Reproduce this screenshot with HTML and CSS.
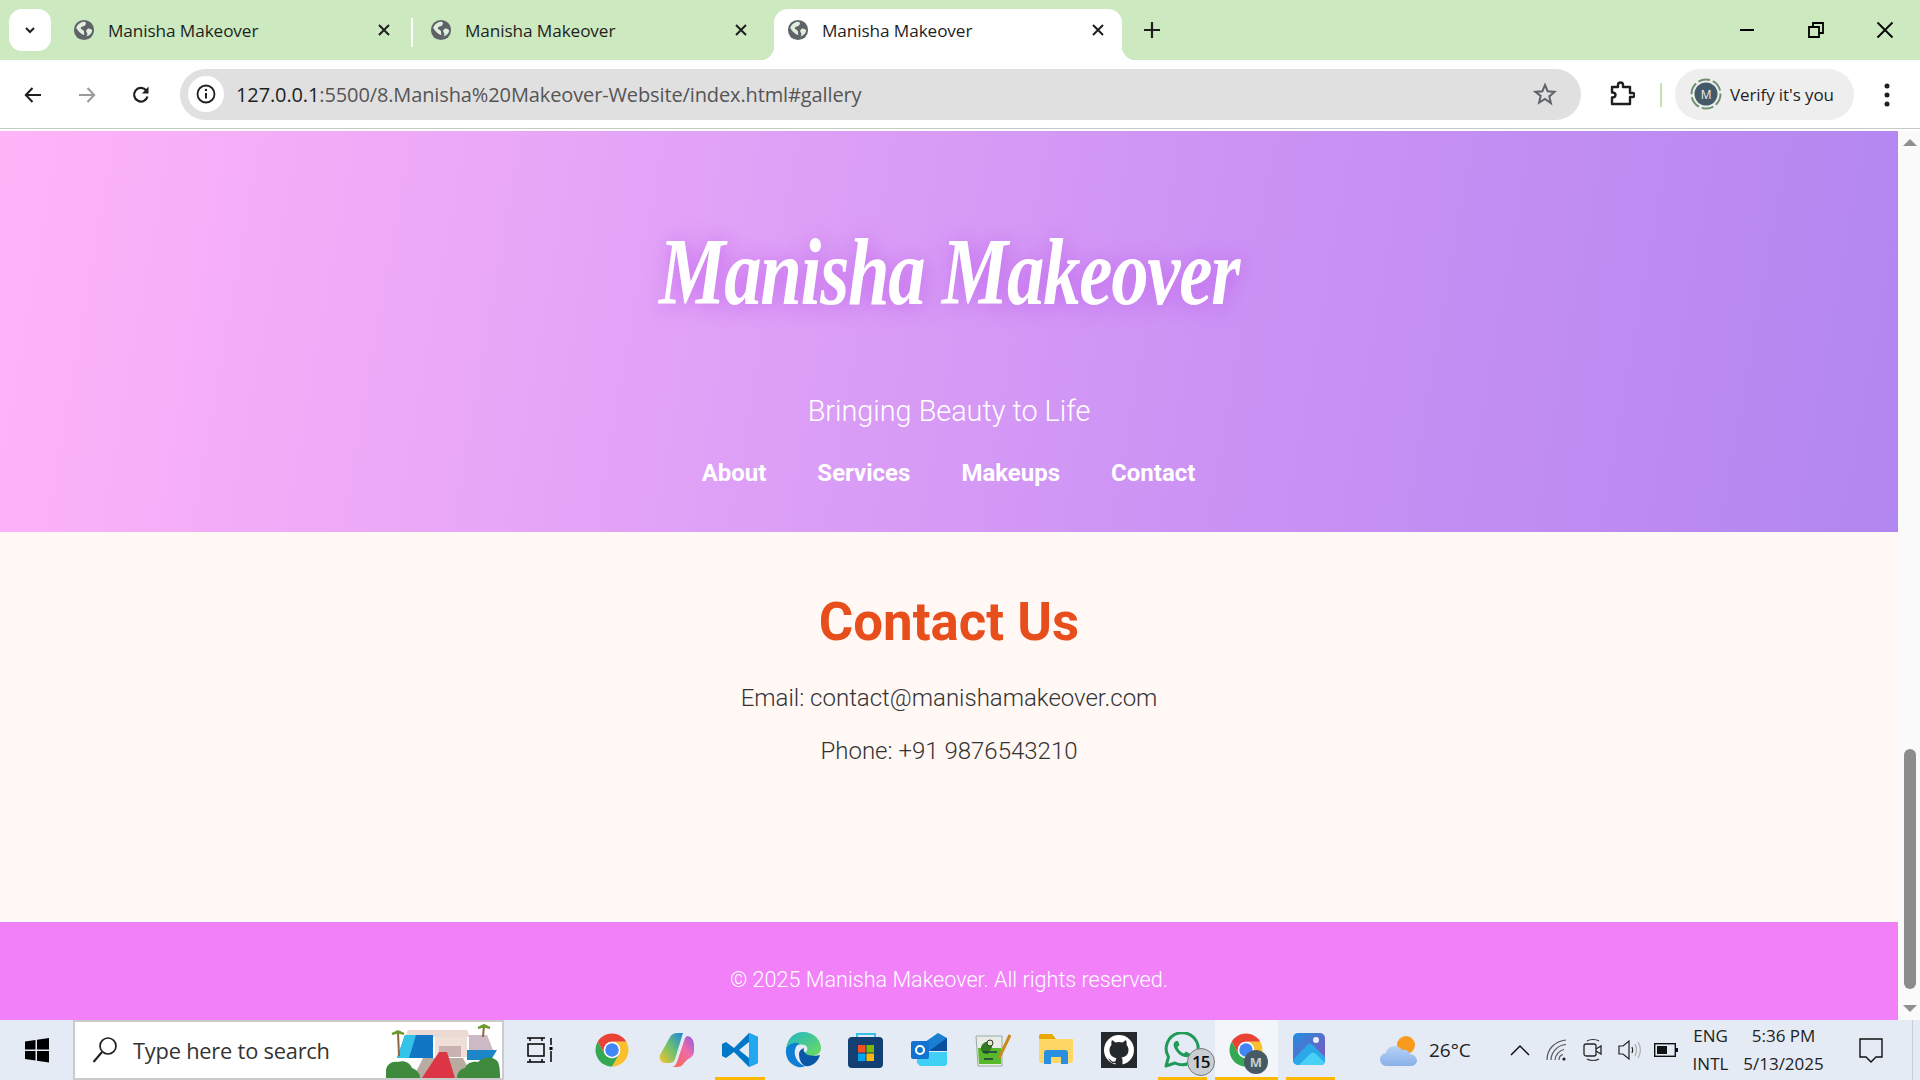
FILE: index.html
```html
<!DOCTYPE html>
<html lang="en">
<head>
<meta charset="utf-8">
<title>Manisha Makeover</title>
<link rel="stylesheet" href="styles.css">
</head>
<body>
<svg class="defs" aria-hidden="true">
  <symbol id="globe" viewBox="0 0 24 24"><circle cx="12" cy="12" r="11" fill="#5f6368"/><path d="M13 3c1.500 1 1.500 3 0 4-1.500 1.200-4 1-4.500 2.500-.4 1.500 2 2 3 3 1 1.200 .3 3 .8 5C9 16.500 5 13 3.500 9.500 5.500 5 9 3 13 3zM21 12.500c-1.500-1.700-3.500-2.500-5.200-1.700-1.700 1-1.700 2.700-.8 4 .9 1 1 2.500-.3 4.200 3.500-1 5.800-3.300 6.300-6.500z" fill="#dfeedd"/></symbol>
  <symbol id="chrome" viewBox="0 0 48 48">
    <path d="M4.950 13A22 22 0 0 1 43.050 13H24A11 11 0 0 0 14.500 29.500z" fill="#ea4335"/>
    <path d="M43.050 13A22 22 0 0 1 24 46L33.500 29.500A11 11 0 0 0 24 13z" fill="#fbc02d"/>
    <path d="M24 46A22 22 0 0 1 4.950 13L14.500 29.500A11 11 0 0 0 33.500 29.500z" fill="#34a853"/>
    <circle cx="24" cy="24" r="11" fill="#fff"/><circle cx="24" cy="24" r="9" fill="#4285f4"/>
  </symbol>
  <symbol id="tabx" viewBox="0 0 14 14"><path d="M2 2l10 10M12 2L2 12" stroke="#1f1f1f" stroke-width="2" fill="none"/></symbol>
</svg>

<div class="window">
  <div class="tabstrip">
    <div class="tabmenu"><svg width="14" height="14" viewBox="0 0 14 14"><path d="M3 5l4 4 4-4" stroke="#1f1f1f" stroke-width="2" fill="none"/></svg></div>
    <div class="tab tab-first">
      <svg class="fav"><use href="#globe"/></svg><span class="tabtitle">Manisha Makeover</span><svg class="tabclose"><use href="#tabx"/></svg>
    </div>
    <div class="tabsep"></div>
    <div class="tab tab-second">
      <svg class="fav"><use href="#globe"/></svg><span class="tabtitle">Manisha Makeover</span><svg class="tabclose"><use href="#tabx"/></svg>
    </div>
    <div class="tab tab-active">
      <svg class="fav"><use href="#globe"/></svg><span class="tabtitle">Manisha Makeover</span><svg class="tabclose"><use href="#tabx"/></svg>
    </div>
    <svg class="newtab" width="18" height="18" viewBox="0 0 18 18"><path d="M9 1v16M1 9h16" stroke="#1f1f1f" stroke-width="2.200"/></svg>
    <div class="winctl">
      <svg width="18" height="18" viewBox="0 0 18 18"><path d="M2 9h14" stroke="#000" stroke-width="2"/></svg>
      <svg width="18" height="18" viewBox="0 0 18 18"><path d="M2 6h10v10H2zM6 6V2h10v10h-4" stroke="#000" stroke-width="1.800" fill="none"/></svg>
      <svg width="18" height="18" viewBox="0 0 18 18"><path d="M1.500 1.500l15 15M16.500 1.500l-15 15" stroke="#000" stroke-width="1.800"/></svg>
    </div>
  </div>

  <div class="toolbar">
    <svg class="nav-ico" viewBox="0 0 20 20"><path d="M18 10H3M9.500 3L2.800 10l6.700 7" stroke="#1f1f1f" stroke-width="2" fill="none"/></svg>
    <svg class="nav-ico" viewBox="0 0 20 20"><path d="M2 10h15M10.500 3l6.700 7-6.700 7" stroke="#9a9a9a" stroke-width="2" fill="none"/></svg>
    <svg class="nav-ico" viewBox="0 0 20 20"><path d="M16.500 11.500A6.800 6.800 0 1 1 15 5.200" stroke="#1f1f1f" stroke-width="2.200" fill="none"/><path d="M17.500 1.500v7H11z" fill="#1f1f1f"/></svg>
    <div class="omnibox">
      <div class="infochip"><svg width="20" height="20" viewBox="0 0 20 20"><circle cx="10" cy="10" r="8.500" stroke="#1f1f1f" stroke-width="1.800" fill="none"/><path d="M10 9v5.500" stroke="#1f1f1f" stroke-width="2"/><circle cx="10" cy="6" r="1.200" fill="#1f1f1f"/></svg></div>
      <span class="url"><span class="url-host">127.0.0.1</span>:5500/8.Manisha%20Makeover-Website/index.html#gallery</span>
      <svg class="star" width="24" height="24" viewBox="0 0 24 24"><path d="M12 3l2.700 6.300 6.800.6-5.200 4.500 1.600 6.700L12 17l-5.900 3.600 1.600-6.700L2.500 9.900l6.800-.6z" stroke="#5f6368" stroke-width="2" fill="none"/></svg>
    </div>
    <svg class="puzzle" width="26" height="26" viewBox="0 0 26 26"><path d="M3 6h6V4a2.500 2.500 0 0 1 5 0v2h7v6h2.500a2 2 0 0 1 0 4H21v7H3v-6.500c3 0 3.500-1.500 3.500-2.500S6 11.500 3 11.500z" stroke="#1f1f1f" stroke-width="2.400" fill="none" stroke-linejoin="round"/></svg>
    <div class="toolsep"></div>
    <div class="verify">
      <svg width="32" height="32" viewBox="0 0 32 32"><circle cx="16" cy="16" r="14.500" stroke="#6c9270" stroke-width="2" stroke-dasharray="12 3" fill="none"/><circle cx="16" cy="16" r="11.500" fill="#455a68"/><text x="16" y="20.500" text-anchor="middle" class="avatar-m">M</text></svg>
      <span>Verify it's you</span>
    </div>
    <svg class="dots" width="6" height="26" viewBox="0 0 6 26"><circle cx="3" cy="4" r="2.500" fill="#1f1f1f"/><circle cx="3" cy="13" r="2.500" fill="#1f1f1f"/><circle cx="3" cy="22" r="2.500" fill="#1f1f1f"/></svg>
  </div>

  <div class="viewport">
    <main class="page">
      <header class="hero">
        <h1 class="logo">Manisha Makeover</h1>
        <p class="tagline">Bringing Beauty to Life</p>
        <nav class="mainnav"><a>About</a><a>Services</a><a>Makeups</a><a>Contact</a></nav>
      </header>
      <section class="contact">
        <h2>Contact Us</h2>
        <p>Email: contact@manishamakeover.com</p>
        <p>Phone: +91 9876543210</p>
      </section>
      <footer class="pagefoot">© 2025 Manisha Makeover. All rights reserved.</footer>
    </main>
    <div class="scrollbar">
      <span class="arrow arrow-up"></span>
      <div class="track"><div class="thumb"></div></div>
      <span class="arrow arrow-down"></span>
    </div>
  </div>

  <div class="taskbar">
    <div class="start"><svg width="26" height="26" viewBox="0 0 26 26"><path d="M1 4.500l10.500-1.500v9.500H1zM13 2.800L25 1v11.500H13zM1 14h10.500v9.500L1 22zM13 14h12v11.500l-12-1.800z" fill="#000"/></svg></div>
    <div class="search">
      <svg class="lens" width="26" height="28" viewBox="0 0 26 28"><circle cx="16" cy="10" r="8" stroke="#1f1f1f" stroke-width="1.700" fill="none"/><path d="M10 16L1.500 26" stroke="#1f1f1f" stroke-width="2"/></svg>
      <span>Type here to search</span>
      <svg class="scene" width="119" height="54" viewBox="0 0 119 54">
        <path d="M25 6h59l3 7H22z" fill="#eadad3"/>
        <path d="M22 11h28v23H14z" fill="#1176c4"/><path d="M22 11l-8 23h12l7-23z" fill="#33c4e8"/>
        <path d="M52 13h32v20H52z" fill="#f0dfd8"/><path d="M56 22h22v11H56z" fill="#c9b2b0"/>
        <path d="M86 11h18l6 15H86z" fill="#cdb9c6"/><path d="M84 26h30l-6 10H84z" fill="#1c86c8"/>
        <path d="M15 8l1 24M101 1l-1 12" stroke="#8a6a3a" stroke-width="2" fill="none"/>
        <path d="M9 10l6-3 6 3-6-1.500zM95 4l6-3 6 3-6-1.500z" fill="#6f9a2a" stroke="#6f9a2a" stroke-width="2"/>
        <path d="M40 34h40l10 20H30z" fill="#b8aca0"/><path d="M56 28h8l8 26H39z" fill="#dc3545"/>
        <path d="M3 54V46c1-6 6-9 12-8 6-2 12 1 14 6 5 2 8 5 8 10z" fill="#3f8a3c"/>
        <path d="M74 54c0-5 3-9 8-10 2-5 7-7 13-6 6-6 16-6 20 0 2 5 2 10 2 16z" fill="#3f8a3c"/>
      </svg>
    </div>
    <div class="appcell taskview"><svg width="28" height="28" viewBox="0 0 28 28"><path d="M1 2h18M1 26h18M4 2v3M16 2v3M4 26v-3M16 26v-3M2 8h16v12H2z M25 2v7M25 15v11" stroke="#000" stroke-width="1.500" fill="none"/><rect x="23.500" y="11" width="3" height="3" fill="#000"/></svg></div>
    <div class="apps">
      <div class="appcell appcell-chrome"><svg class="appico"><use href="#chrome"/></svg></div>
      <div class="appcell"><svg class="appico" viewBox="0 0 36 36">
        <defs><linearGradient id="cp1" x1="0" y1="1" x2="1" y2="0"><stop offset="0" stop-color="#f7c42c"/><stop offset=".5" stop-color="#6cc070"/><stop offset="1" stop-color="#1b87e0"/></linearGradient><linearGradient id="cp2" x1="0" y1="1" x2="1" y2="0"><stop offset="0" stop-color="#f7694a"/><stop offset=".6" stop-color="#f06ba8"/><stop offset="1" stop-color="#8a5ce0"/></linearGradient></defs>
        <path d="M11 5c2-3 4-4 7-4h6l-8 26c-1 3-3 4-6 4H6C2 31 0 27 1 23z" fill="url(#cp1)"/><path d="M25 31c-2 3-4 4-7 4h-6c3 0 5-2 6-5l8-24 2-2c4 0 7 4 7 9v6c0 4-3 7-6 8z" fill="url(#cp2)"/></svg></div>
      <div class="appcell appcell-open"><svg class="appico" viewBox="0 0 36 36"><path d="M27 1l9 4v26l-9 4L12 20l-8 6-4-2V12l4-2 8 6z" fill="#0078c8"/><path d="M27 1l9 4v26l-9 4z" fill="#22a7f0"/><path d="M27 10l-10 8 10 8z" fill="#e4ebf4"/></svg></div>
      <div class="appcell"><svg class="appico" viewBox="0 0 36 36">
        <defs><linearGradient id="ed1" x1="0" y1="0" x2="1" y2="1"><stop offset="0" stop-color="#1fb6c9"/><stop offset="1" stop-color="#6fdc5a"/></linearGradient></defs>
        <path d="M1 17C2 7 9 0 18 0c11 0 18 8 18 16 0 6-5 8-10 8-4 0-7-1-7-3 3-1 4-3 3-6-1-2-4-3-8-2C8 14 2 15 1 17z" fill="url(#ed1)"/><path d="M1 17c2-5 8-7 13-6-3 3-5 7-4 12 1 5 5 9 10 11 0 0-3 2-7 1C5 33 0 26 1 17z" fill="#0f7fd6"/><path d="M14 22c0-3 2-5 5-6-1 2 0 5 4 7 4 1 9 1 12 0-2 7-8 12-15 11-4-2-6-7-6-12z" fill="#0a56a8"/></svg></div>
      <div class="appcell"><svg class="appico" viewBox="0 0 36 36"><path d="M9 5V2h18v3" stroke="#35c0e8" stroke-width="2" fill="none"/><rect y="5" width="35" height="31" rx="4" fill="#143f73"/><rect x="10" y="13" width="7.500" height="7.500" fill="#f25022"/><rect x="18.500" y="13" width="7.500" height="7.500" fill="#7fba00"/><rect x="10" y="21.500" width="7.500" height="7.500" fill="#00a4ef"/><rect x="18.500" y="21.500" width="7.500" height="7.500" fill="#ffb900"/></svg></div>
      <div class="appcell"><svg class="appico" viewBox="0 0 36 36"><path d="M14 10L27 1l9 5v13H14z" fill="#1a7fd0"/><path d="M18 19l18-13v13z" fill="#0a4ea0"/><path d="M6 31V20h30v10a3 3 0 0 1-3 4H9z" fill="#3fd0f5"/><rect y="9" width="18" height="18" rx="2" fill="#1273d0"/><circle cx="9" cy="18" r="4" stroke="#fff" stroke-width="2.200" fill="none"/></svg></div>
      <div class="appcell"><svg class="appico" viewBox="0 0 36 36"><path d="M1 4h26v30H3z" fill="#e9ece4" stroke="#9aa" stroke-width="1"/><path d="M3 16h23v16H4z" fill="#57b82c"/><path d="M6 15c2-6 10-8 11-2 1 4-4 6-4 9-3 1-8-2-7-7z" fill="#2f7a22"/><circle cx="15" cy="11" r="3" fill="#dfe8c8" stroke="#333"/><path d="M24 26L35 3" stroke="#c88a1e" stroke-width="3"/><path d="M8 20h14M9 27h9" stroke="#234" stroke-width="1.500"/></svg></div>
      <div class="appcell"><svg class="appico" viewBox="0 0 36 36"><path d="M1 4a2 2 0 0 1 2-2h11l4 5h-17z" fill="#e8a800"/><path d="M1 7h34v22a2 2 0 0 1-2 2H3a2 2 0 0 1-2-2z" fill="#ffd767"/><path d="M6 32V21a3 3 0 0 1 3-3h18a3 3 0 0 1 3 3v11h-7v-7H13v7z" fill="#2a8fe0"/></svg></div>
      <div class="appcell"><svg class="appico" viewBox="0 0 36 36"><rect width="36" height="36" fill="#24292e"/><circle cx="18" cy="18" r="15" fill="#fff"/><path d="M11 8l3.500 2.500c2.300-.7 4.700-.7 7 0L25 8c.8 2 .8 3.500.5 5 1.300 1.300 2 3 2 5 0 5-3.500 7-7 7.500.8.800 1 2 1 3V33h-7v-2c-3 .5-5-.5-6-3-1-1.500-2-1.500-2-1.500 2 0 3 1 4 2.500 1 .8 2.500.8 4 .2 0-1 .3-2 1-3C11 25 8.500 23 8.500 18c0-2 .7-3.700 2-5-.3-1.500-.3-3 .5-5z" fill="#24292e"/></svg></div>
      <div class="appcell appcell-open"><svg class="appico appico-over" viewBox="0 0 36 36"><path d="M2 34l2.500-9A16 16 0 1 1 11 31z" fill="none" stroke="#1f9a58" stroke-width="3" stroke-linejoin="round"/><path d="M12 9c-2 1-3 3-2 6 2 5 6 9 11 10 3 .6 5-.8 5.500-3l-4.500-2.500-2 2c-3-1-5.500-3.500-6.500-6.500l2-2L14 9z" fill="#1f9a58"/></svg><span class="badge">15</span></div>
      <div class="appcell appcell-open appcell-active"><svg class="appico"><use href="#chrome"/></svg><span class="badge-m">M</span></div>
      <div class="appcell appcell-open"><svg class="appico" viewBox="0 0 36 36">
        <defs><linearGradient id="ph" x1="0" y1="0" x2="1" y2="1"><stop offset="0" stop-color="#2090e0"/><stop offset="1" stop-color="#8a4fb8"/></linearGradient></defs>
        <rect x="1" y="1" width="32" height="32" rx="5" fill="url(#ph)"/><circle cx="24" cy="8" r="3" fill="#eef"/><path d="M1 28l14-15c2-2 4-2 6 0l12 12v3a5 5 0 0 1-5 5H6a5 5 0 0 1-5-5z" fill="#2ba8e8"/><path d="M7 33l11-11c2-2 4-2 6 0l9 9-2 2z" fill="#48d0f5"/></svg></div>
    </div>
    <div class="tray">
      <svg class="weather" width="38" height="32" viewBox="0 0 38 32">
        <defs><linearGradient id="cl" x1="0" y1="0" x2="0" y2="1"><stop offset="0" stop-color="#b8d2f8"/><stop offset="1" stop-color="#88b0e8"/></linearGradient></defs>
        <circle cx="26" cy="10" r="9" fill="#f79a1e"/><path d="M7 31a6.500 6.500 0 0 1-1-13c1-7 11-10 16-3 3-1 7 0 8 4 4 0 7 4 7 6.500 0 3-3 5.500-6 5.500z" fill="url(#cl)"/></svg>
      <span class="temp">26°C</span>
      <div class="trayico tray-caret"><svg width="20" height="12" viewBox="0 0 20 12"><path d="M1 11l9-9 9 9" stroke="#111" stroke-width="1.500" fill="none"/></svg></div>
      <div class="trayico"><svg width="22" height="22" viewBox="0 0 22 22"><path d="M1 21C1 10 9 2 20 1M5 21C5 13 12 6 20 5.500M9 21c0-5 5-10 9-10.500M13 21c0-3 2-5 4-5.500" stroke="#555" stroke-width="1.200" fill="none"/><circle cx="18" cy="20" r="1.600" fill="#222"/></svg></div>
      <div class="trayico"><svg width="20" height="24" viewBox="0 0 20 24"><path d="M4 3c3-2 9-2 12 0M4 21c3 2 9 2 12 0" stroke="#333" stroke-width="1.200" fill="none"/><rect x="1" y="6" width="12" height="12" rx="2" stroke="#222" stroke-width="1.300" fill="none"/><path d="M13 11l5-3v8l-5-3" stroke="#222" stroke-width="1.300" fill="none"/></svg></div>
      <div class="trayico"><svg width="24" height="22" viewBox="0 0 24 22"><path d="M1 7h4l6-5v18l-6-5H1z" stroke="#222" stroke-width="1.200" fill="none"/><path d="M14 8c1 2 1 4 0 6" stroke="#222" stroke-width="1.200" fill="none"/><path d="M17 5c2 4 2 8 0 12M20 3c3 5 3 11 0 16" stroke="#aaa" stroke-width="1.200" fill="none"/></svg></div>
      <div class="trayico"><svg width="24" height="14" viewBox="0 0 24 14"><rect x=".7" y=".7" width="20.600" height="12.600" stroke="#111" stroke-width="1.400" fill="none"/><rect x="3" y="3" width="10" height="8" fill="#111"/><rect x="22" y="5" width="2" height="4" fill="#111"/></svg></div>
      <div class="traytext tray-lang"><span>ENG</span><span>INTL</span></div>
      <div class="traytext tray-clock"><span>5:36 PM</span><span>5/13/2025</span></div>
      <svg class="notify" width="24" height="25" viewBox="0 0 24 25"><path d="M1 1h22v18h-6l-5 5-5-5H1z" stroke="#111" stroke-width="1.400" fill="none"/></svg>
    </div>
  </div>
</div>
</body>
</html>
```
FILE: styles.css
```css
* { box-sizing: border-box; }
html, body { margin: 0; height: 100%; overflow: hidden; }
body { font-family: "Open Sans", "Noto Sans", sans-serif; color: #1f1f1f; }
.defs { width: 0; height: 0; position: absolute; }
.window { display: flex; flex-direction: column; height: 1080px; width: 1920px; }

/* tab strip */
.tabstrip { height: 60px; background: #cce9c0; display: flex; align-items: flex-start; padding-left: 9px; flex: none; }
.tabmenu { width: 42px; height: 42px; margin-top: 9px; background: #fff; border-radius: 13px; display: flex; align-items: center; justify-content: center; flex: none; }
.tab { height: 51px; margin-top: 9px; display: flex; align-items: center; padding-bottom: 10px; position: relative; flex: none; }
.tab-first { width: 361px; padding-left: 22px; padding-right: 21px; }
.tab-second { width: 361px; padding-left: 17px; padding-right: 26px; }
.tab-active { background: #fff; width: 348px; border-radius: 14px 14px 0 0; padding-left: 13px; padding-right: 17px; }
.tab-active::before, .tab-active::after { content: ""; position: absolute; bottom: 0; width: 14px; height: 14px; }
.tab-active::before { left: -14px; background: radial-gradient(circle at 0 0, #cce9c0 14px, #fff 14.5px); }
.tab-active::after { right: -14px; background: radial-gradient(circle at 100% 0, #cce9c0 14px, #fff 14.5px); }
.tabsep { width: 2px; height: 29px; margin-top: 18px; margin-left: -1px; background: #fff; flex: none; }
.fav { width: 22px; height: 22px; flex: none; }
.tabtitle { font-size: 17.200px; margin: 2px 0 0 13px; flex: 1; white-space: nowrap; letter-spacing: -.1px; }
.tabclose { width: 14px; height: 14px; flex: none; }
.newtab { margin: 21px 0 0 21px; flex: none; }
.winctl { margin-left: auto; display: flex; gap: 51px; padding: 21px 26px 0 0; }

/* toolbar */
.toolbar { height: 69px; background: #fff; border-radius: 12px 12px 0 0; margin-bottom: 2px; display: flex; align-items: center; padding: 0 0 0 23px; flex: none; position: relative; }
.toolbar::after { content: ""; position: absolute; left: 0; right: 0; bottom: 0; height: 1px; background: #c6c9c6; }
.nav-ico { width: 20px; height: 20px; flex: none; margin-right: 34px; }
.nav-ico:nth-child(3) { margin-right: 29px; }
.omnibox { width: 1401px; height: 51px; margin-bottom: 1px; background: #e0e0e0; border-radius: 26px; display: flex; align-items: center; padding: 0 24px 0 8px; flex: none; }
.infochip { width: 36px; height: 36px; border-radius: 50%; background: #fff; display: flex; align-items: center; justify-content: center; flex: none; }
.url { margin-left: 12px; font-size: 20px; color: #555; white-space: nowrap; flex: 1; letter-spacing: -.12px; }
.url-host { color: #1f1f1f; }
.star { flex: none; }
.puzzle { margin-left: 28px; margin-bottom: 1px; flex: none; }
.toolsep { width: 2px; height: 24px; background: #bfe3b3; margin-left: 25px; flex: none; }
.verify { width: 179px; height: 51px; margin-left: 13px; margin-bottom: 1px; background: #eee; border-radius: 26px; display: flex; align-items: center; padding-left: 15px; gap: 8px; font-size: 17px; white-space: nowrap; flex: none; letter-spacing: -.1px; }
.avatar-m { font: 12px "Open Sans", sans-serif; fill: #eee; }
.dots { margin-left: 30px; flex: none; }

/* page */
.viewport { flex: 1; display: flex; min-height: 0; }
.page { flex: 1; display: flex; flex-direction: column; font-family: Roboto, sans-serif; min-width: 0; }
.hero { height: 401px; flex: none; text-align: center; color: #fff; padding-top: 96px; background: linear-gradient(100deg, #ffb4f8 0%, #e2a3f7 35%, #cb92f4 65%, #b286f0 100%); }
.logo { margin: 0; font: italic 700 88px/92px "Liberation Serif", serif; letter-spacing: -1.500px; text-shadow: 2px 2px 22px rgba(190, 90, 235, .75); transform: scale(.85, 1.08); }
.tagline { margin: 75px 0 0; font-size: 28.800px; font-weight: 300; line-height: 34px; }
.mainnav { display: flex; justify-content: center; gap: 51px; margin-top: 31px; margin-right: 1px; font-size: 24px; font-weight: 700; line-height: 28px; }
.contact { flex: 1; background: #fff8f5; text-align: center; color: #333; padding-top: 59px; }
.contact h2 { margin: 0 0 31px; font-size: 52.800px; line-height: 62px; font-weight: 700; color: #e84e1b; }
.contact p { margin: 0 0 25px; font-size: 24px; font-weight: 300; line-height: 28px; }
.pagefoot { height: 98px; flex: none; background: #f281f9; color: #fff; text-align: center; font-size: 21.600px; font-weight: 300; padding-top: 45px; line-height: 26px; }

/* scrollbar */
.scrollbar { width: 22px; flex: none; background: #fafafa; display: flex; flex-direction: column; align-items: center; padding: 8px 0 8px 1px; }
.arrow { width: 0; height: 0; border-left: 7px solid transparent; border-right: 7px solid transparent; flex: none; }
.arrow-up { border-bottom: 7px solid #8f8f8f; }
.arrow-down { border-top: 7px solid #8f8f8f; }
.track { flex: 1; width: 100%; display: flex; justify-content: center; align-items: flex-end; padding-bottom: 16px; }
.thumb { width: 12px; height: 240px; background: #8c8c8c; border-radius: 6px; }

/* taskbar */
.taskbar { height: 60px; flex: none; background: #e4ebf4; display: flex; align-items: stretch; }
.start { width: 73px; display: flex; align-items: center; justify-content: center; flex: none; }
.search { width: 431px; background: #fff; border: 2px solid #cbcbcb; display: flex; align-items: center; padding-left: 17px; position: relative; flex: none; font-size: 21.800px; color: #333; overflow: hidden; }
.search span { margin-left: 15px; letter-spacing: -.2px; }
.scene { position: absolute; right: 0; bottom: 0; }
.apps { display: flex; width: 760px; flex: none; }
.appcell { flex: 1; display: flex; align-items: center; justify-content: center; position: relative; min-width: 0; }
.appcell.taskview { flex: none; width: 64px; margin: 0 10px 0 4px; }
.appcell-chrome .appico { margin-left: -3px; }
.appico { width: 36px; height: 36px; }
.appcell-open::after { content: ""; position: absolute; bottom: 0; left: 7px; right: 7px; height: 3px; background: #fdb900; }
.appcell-active { background: #f2f6fa; margin: 0 1px; }
.appcell-active::after { left: 0; right: 0; }
.badge { position: absolute; right: -1px; bottom: 4px; width: 28px; height: 28px; border-radius: 50%; background: #c9ced3; border: 1px solid #777; font: 600 17px/26px "Open Sans", sans-serif; text-align: center; color: #111; letter-spacing: -1px; }
.badge-m { position: absolute; right: 10px; bottom: 6px; width: 24px; height: 24px; border-radius: 50%; background: #455a64; color: #c5ccd0; font: 700 13px/24px "Open Sans", sans-serif; text-align: center; }
.tray { flex: 1; display: flex; align-items: center; padding-left: 38px; background: #e4ebf4; border-right: 1px solid #c8ced6; margin-right: 7px; position: relative; }
.weather { flex: none; margin-top: 2px; }
.temp { font-size: 19px; color: #222; margin-left: 11px; width: 73px; flex: none; }
.trayico { width: 36.500px; display: flex; align-items: center; justify-content: center; flex: none; }
.traytext { display: flex; flex-direction: column; align-items: center; font-size: 17px; line-height: 28px; color: #222; flex: none; }
.tray-lang { width: 48px; margin-left: 2px; }
.tray-clock { width: 94px; margin-left: 2px; }
.notify { margin-left: 28px; flex: none; }
```
